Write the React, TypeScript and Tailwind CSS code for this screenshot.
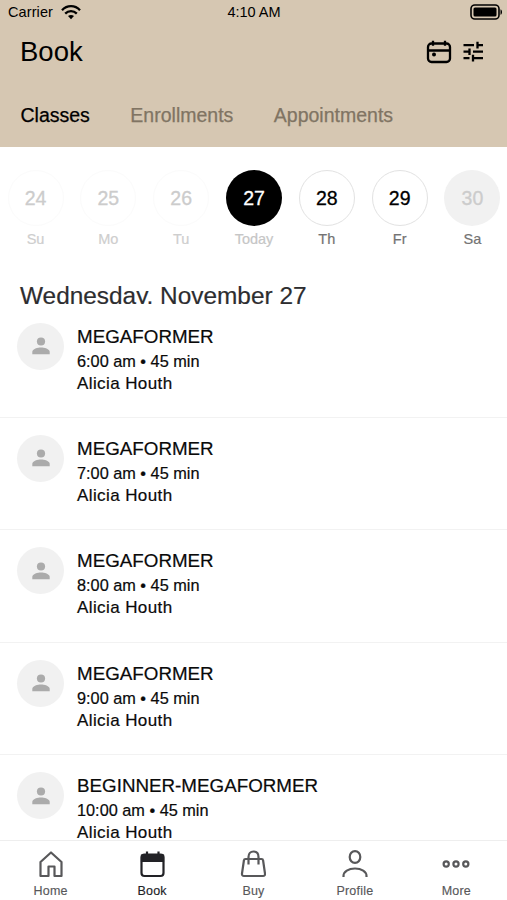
import React from 'react';

interface Day {
  date: number;
  label: string;
  circle: string;
  text: string;
}

const days: Day[] = [
  { date: 24, label: 'Su', circle: 'border border-[#fbfbfb] text-[#cccccc]', text: 'text-[#cecece]' },
  { date: 25, label: 'Mo', circle: 'border border-[#fbfbfb] text-[#cccccc]', text: 'text-[#cecece]' },
  { date: 26, label: 'Tu', circle: 'border border-[#fbfbfb] text-[#cccccc]', text: 'text-[#cecece]' },
  { date: 27, label: 'Today', circle: 'bg-black text-white', text: 'text-[#c6c6c6]' },
  { date: 28, label: 'Th', circle: 'border border-[#e2e2e2] text-black', text: 'text-[#737373]' },
  { date: 29, label: 'Fr', circle: 'border border-[#e2e2e2] text-black', text: 'text-[#737373]' },
  { date: 30, label: 'Sa', circle: 'bg-[#f1f1f1] text-[#cccccc]', text: 'text-[#737373]' },
];

const classes = [
  { name: 'MEGAFORMER', time: '6:00 am', teacher: 'Alicia Houth' },
  { name: 'MEGAFORMER', time: '7:00 am', teacher: 'Alicia Houth' },
  { name: 'MEGAFORMER', time: '8:00 am', teacher: 'Alicia Houth' },
  { name: 'MEGAFORMER', time: '9:00 am', teacher: 'Alicia Houth' },
  { name: 'BEGINNER-MEGAFORMER', time: '10:00 am', teacher: 'Alicia Houth' },
];

const StatusBar: React.FC = () => (
  <div className="grid h-6 grid-cols-3 items-center pl-2 pr-1 text-[14.5px] leading-6">
    <div className="flex items-center gap-2">
      <span className="tracking-[0.1px]">Carrier</span>
      <svg width="20" height="15" viewBox="0 0 20 15" fill="none" stroke="black" strokeWidth="2.3">
        <path d="M1 5.2C6-.2 14-.2 19 5.2" />
        <path d="M4.2 8.6c3.3-3.4 8.3-3.4 11.6 0" />
        <path d="M10 14.3l-3-3.2c1.7-1.6 4.3-1.6 6 0z" fill="black" stroke="none" />
      </svg>
    </div>
    <span className="pr-[3px] text-center">4:10 AM</span>
    <svg className="justify-self-end" width="33" height="16" viewBox="0 0 33 16">
      <rect x="1" y="1" width="28" height="14" rx="3.8" fill="none" stroke="black" strokeWidth="1.6" />
      <rect x="3.5" y="3.5" width="23" height="9" rx="1.5" fill="black" />
      <path d="M30.5 5.2c2 .8 2 4.8 0 5.6z" fill="black" />
    </svg>
  </div>
);

const Header: React.FC = () => (
  <header className="h-[147px] shrink-0 bg-[#d6c7b2] text-black">
    <StatusBar />
    <div className="flex h-14 items-center justify-between pl-[20px] pr-[23px]">
      <h1 className="text-[27.5px] leading-none">Book</h1>
      <div className="flex items-center gap-[10px]">
        <svg width="26" height="24" viewBox="0 0 26 24" fill="none" stroke="black" strokeWidth="2.3">
          <rect x="2" y="3.5" width="22" height="18.5" rx="3.5" />
          <path d="M2 10.5h22M7 .8v5M19 .8v5" />
          <circle cx="8" cy="14.5" r="2" fill="black" stroke="none" />
        </svg>
        <svg width="22" height="24" viewBox="0 0 22 24" fill="none" stroke="black" strokeWidth="2.3">
          <path d="M1.5 5.2h10.5M15 5.2h6M15.5 1.8v6.8" />
          <path d="M1.5 11.7h6M11 11.7h10M7.5 8.5v6.5" />
          <path d="M1.5 18.2h6M11 18.2h10M11 14.8v6.8" />
        </svg>
      </div>
    </div>
    <nav className="flex gap-[40.5px] pl-[20.5px] pt-[22px] text-[19.5px] leading-[26px] text-[#807463] [-webkit-text-stroke:0.25px]">
      <span className="text-black">Classes</span>
      <span>Enrollments</span>
      <span>Appointments</span>
    </nav>
  </header>
);

const DayPicker: React.FC = () => (
  <div className="flex h-[130px] shrink-0 justify-between pl-[7.5px] pr-[6.5px] pt-[23px]">
    {days.map((day) => (
      <div key={day.date} className="flex w-14 flex-col items-center">
        <div
          className={`flex size-14 items-center justify-center rounded-full pt-[2px] text-[19.5px] [-webkit-text-stroke:0.3px] ${day.circle}`}
        >
          {day.date}
        </div>
        <span className={`mt-0.5 text-[14.5px] leading-[22px] [-webkit-text-stroke:0.2px] ${day.text}`}>{day.label}</span>
      </div>
    ))}
  </div>
);

const ClassItem: React.FC<{ name: string; time: string; teacher: string }> = ({ name, time, teacher }) => (
  <div className="flex h-[112.4px] shrink-0 gap-[13px] border-b border-[#f2f2f2] pl-[17px] pt-[17px]">
    <div className="flex size-[47px] items-center justify-center rounded-full bg-[#f1f1f1]">
      <svg width="18" height="18" viewBox="0 0 18 18" fill="#ababab">
        <circle cx="9" cy="4.5" r="4.1" />
        <path d="M.3 17.3v-2.5c0-3 5.500-4.400 8.700-4.400s8.700 1.400 8.700 4.400v2.500z" />
      </svg>
    </div>
    <div className="pt-[2px] text-[#0a0a0a] [-webkit-text-stroke:0.2px]">
      <div className="text-[18.8px] leading-6">{name}</div>
      <div className="text-[16.3px] leading-[25px]">{time} • 45 min</div>
      <div className="text-[17px] leading-5 tracking-[0.4px]">{teacher}</div>
    </div>
  </div>
);

const HomeIcon = () => (
  <svg width="26" height="28" viewBox="0 0 26 28" fill="none" stroke="currentColor" strokeWidth="2.2" strokeLinejoin="round">
    <path d="M2.5 12L13 2.5l10.500 9.500V26h-7v-9.500h-6V26h-8z" />
  </svg>
);

const BookIcon = () => (
  <svg width="26" height="28" viewBox="0 0 26 28" fill="none" stroke="currentColor" strokeWidth="2.2">
    <rect x="2.5" y="4.5" width="22" height="21.5" rx="3" />
    <path d="M3 5.500h21v5.500H3z" fill="currentColor" />
    <path d="M8 1.500v5M19.500 1.500v5" />
  </svg>
);

const BuyIcon = () => (
  <svg width="26" height="28" viewBox="0 0 26 28" fill="none" stroke="currentColor" strokeWidth="2.2" strokeLinejoin="round">
    <path d="M5.500 9h16c1 0 1.500.5 1.600 1.500L25 23.500c.2 1.500-.6 2.500-2 2.500H4c-1.400 0-2.200-1-2-2.500l1.900-13C4 9.500 4.500 9 5.500 9z" />
    <path d="M8.500 14.500V7c0-3.500 2-5.500 5-5.500s5 2 5 5.500v7.500" />
  </svg>
);

const ProfileIcon = () => (
  <svg width="26" height="28" viewBox="0 0 26 28" fill="none" stroke="currentColor" strokeWidth="2.2">
    <ellipse cx="13" cy="7" rx="5.3" ry="5.9" />
    <path d="M1.500 27v-1c0-4.500 5-7.500 11.500-7.500s11.500 3 11.500 7.500v1" />
  </svg>
);

const MoreIcon = () => (
  <svg width="28" height="28" viewBox="0 0 28 28" fill="none" stroke="currentColor" strokeWidth="2.2">
    <circle cx="4.2" cy="14" r="2.6" />
    <circle cx="14" cy="14" r="2.6" />
    <circle cx="23.8" cy="14" r="2.6" />
  </svg>
);

const tabs = [
  { label: 'Home', icon: <HomeIcon />, color: 'text-[#58585a]' },
  { label: 'Book', icon: <BookIcon />, color: 'text-[#222226]' },
  { label: 'Buy', icon: <BuyIcon />, color: 'text-[#58585a]' },
  { label: 'Profile', icon: <ProfileIcon />, color: 'text-[#58585a]' },
  { label: 'More', icon: <MoreIcon />, color: 'text-[#58585a]' },
];

const App: React.FC = () => (
  <div className="flex h-[900px] w-[507px] flex-col overflow-hidden bg-white font-['Liberation_Sans',sans-serif]">
    <Header />
    <DayPicker />
    <h2 className="mb-[1.6px] h-[27px] shrink-0 overflow-hidden pl-[20px] text-[24.4px] leading-[38px] text-[#2d2d2f] [-webkit-text-stroke:0.2px]">
      Wednesday, November 27
    </h2>
    <main className="flex min-h-0 flex-1 flex-col overflow-hidden">
      {classes.map((item) => (
        <ClassItem key={item.time} {...item} />
      ))}
    </main>
    <footer className="grid h-[60px] shrink-0 grid-cols-5 border-t border-[#eeeeee] bg-white">
      {tabs.map((tab) => (
        <div key={tab.label} className={`flex flex-col items-center pt-[9px] ${tab.color}`}>
          {tab.icon}
          <span className="mt-[4px] text-[12.5px] leading-[18px] tracking-[0.2px] [-webkit-text-stroke:0.15px]">
            {tab.label}
          </span>
        </div>
      ))}
    </footer>
  </div>
);

export default App;
